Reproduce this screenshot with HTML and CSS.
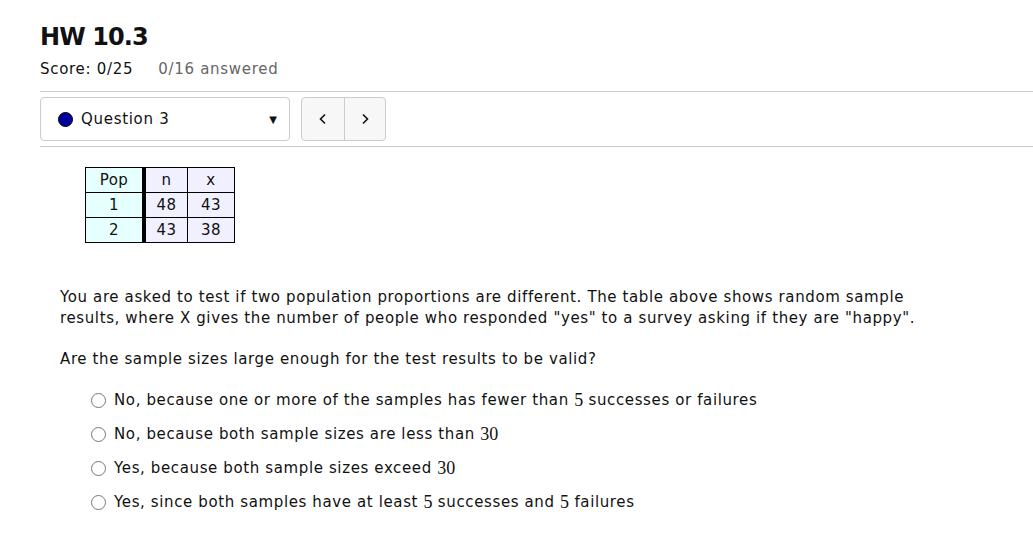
FILE: index.html
```html
<!DOCTYPE html>
<html>
<head>
<meta charset="utf-8">
<link rel="stylesheet" href="styles.css">
</head>
<body>
<div class="page">
  <h1 class="title">HW 10.3</h1>
  <div class="score"><span>Score: 0/25</span><span class="answered">0/16 answered</span></div>
  <div class="navbar">
    <div class="select">
      <span class="dot"></span>
      <span class="qlabel">Question 3</span>
      <span class="caret">&#9660;</span>
    </div>
    <div class="navbtns">
      <button class="nb">
        <svg width="10" height="12" viewBox="0 0 10 12"><path d="M7 1.5 L2.5 6 L7 10.5" fill="none" stroke="#111" stroke-width="1.6"/></svg>
      </button>
      <button class="nb">
        <svg width="10" height="12" viewBox="0 0 10 12"><path d="M3 1.5 L7.5 6 L3 10.5" fill="none" stroke="#111" stroke-width="1.6"/></svg>
      </button>
    </div>
  </div>
  <div class="question">
    <table class="data">
      <tr><td class="pop">Pop</td><td class="v">n</td><td class="v">x</td></tr>
      <tr><td class="pop">1</td><td class="v">48</td><td class="v">43</td></tr>
      <tr><td class="pop">2</td><td class="v">43</td><td class="v">38</td></tr>
    </table>
    <p class="text">You are asked to test if two population proportions are different. The table above shows random sample results, where X gives the number of people who responded "yes" to a survey asking if they are "happy".</p>
    <p class="ask">Are the sample sizes large enough for the test results to be valid?</p>
    <ul class="options">
      <li><span class="radio"></span>No, because one or more of the samples has fewer than <span class="m">5</span> successes or failures</li>
      <li><span class="radio"></span>No, because both sample sizes are less than <span class="m">30</span></li>
      <li><span class="radio"></span>Yes, because both sample sizes exceed <span class="m">30</span></li>
      <li><span class="radio"></span>Yes, since both samples have at least <span class="m">5</span> successes and <span class="m">5</span> failures</li>
    </ul>
  </div>
</div>
</body>
</html>
```
FILE: styles.css
```css
html, body { margin: 0; padding: 0; background: #fff; }
body { font-family: "DejaVu Sans", Verdana, sans-serif; color: #111; letter-spacing: 0.62px; }
.page { padding: 21px 0 0 40px; }
.title { margin: 0; font-size: 24px; font-weight: bold; line-height: 32px; letter-spacing: -0.9px; }
.score { margin-top: 6px; font-size: 15px; line-height: 20px; display: flex; gap: 25px; letter-spacing: 0.7px; }
.answered { color: #666; }
.navbar { margin-top: 12px; border-top: 1px solid #ccc; border-bottom: 1px solid #ccc; padding: 5px 0; display: flex; gap: 11px; }
.select { width: 231px; height: 42px; border: 1px solid #ccc; border-radius: 4px; display: flex; align-items: center; padding: 0 0 0 17px; }
.dot { width: 15px; height: 15px; border-radius: 50%; background: #00009a; border: 1px solid #000; box-sizing: border-box; margin-right: 8px; }
.qlabel { font-size: 15px; flex: 1; letter-spacing: 0.7px; }
.caret { font-size: 10px; margin-right: 12px; letter-spacing: 0; }
.navbtns { display: flex; border: 1px solid #ccc; border-radius: 4px; overflow: hidden; background: #f7f7f7; }
.nb { width: 42px; height: 42px; border: 0; background: transparent; padding: 0; display: flex; align-items: center; justify-content: center; }
.nb + .nb { border-left: 1px solid #ccc; width: 41px; }
.question { padding: 20px 0 0 20px; }
.data { border-collapse: collapse; margin-left: 25px; font-size: 15px; letter-spacing: 0.5px; }
.data td { border: 1px solid #000; text-align: center; height: 24px; padding: 0; }
.data td.pop { background: #e6ffff; width: 56px; border-right: 4px solid #000; }
.data td.v { background: #f0f0ff; width: 41px; }
.data td.v:last-child { width: 46px; }
.text { margin: 44px 0 0 0; font-size: 15px; line-height: 21px; width: 880px; }
.ask { margin: 20px 0 0 0; font-size: 15px; line-height: 21px; }
.options { list-style: none; margin: 13px 0 0 31px; padding: 0; font-size: 15px; }
.options li { height: 34px; display: flex; align-items: center; white-space: pre; }
.radio { width: 13px; height: 13px; border: 1px solid #777; border-radius: 50%; margin-right: 8px; }
.m { font-family: "Liberation Serif", "DejaVu Serif", serif; font-size: 18px; letter-spacing: 0; }
```
